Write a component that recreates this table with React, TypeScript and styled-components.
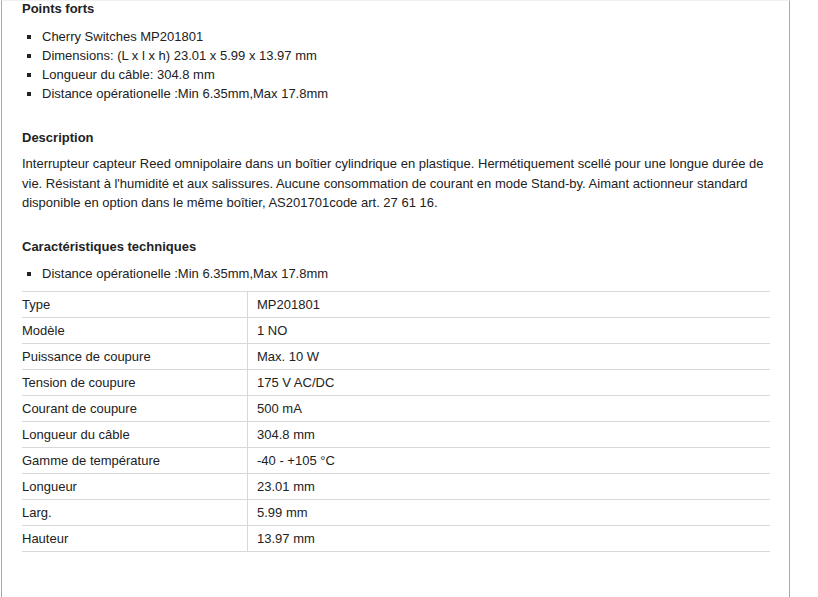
import React, { Fragment } from 'react';
import styled, { createGlobalStyle } from 'styled-components';

const Global = createGlobalStyle`
	body {
		margin: 0;
		background: #ffffff;
		font-family: 'Liberation Sans', Arial, sans-serif;
		color: #222222;
	}
`;

const Panel = styled.div`
	width: 748px;
	min-height: 597px;
	margin-left: 1px;
	padding: 0 19px 0 20px;
	border-left: 1px solid #a8a8a8;
	border-right: 1px solid #a8a8a8;
	border-top: 1px solid #f0f0f0;
	box-sizing: content-box;
`;

const Heading = styled.h3<{ $top: number }>`
	margin: ${(p) => p.$top}px 0 0 0;
	font-size: 13px;
	font-weight: bold;
	line-height: 16px;
	color: #222222;
`;

const Bullets = styled.ul<{ $top: number }>`
	margin: ${(p) => p.$top}px 0 0 0;
	padding: 0 0 0 20px;
	list-style: square;
	font-size: 13px;
	line-height: 19px;
`;

const Para = styled.p`
	margin: 8px 0 0 0;
	font-size: 13px;
	line-height: 19.5px;
	max-width: 748px;
`;

const Specs = styled.table`
	margin-top: 8px;
	width: 748px;
	border-collapse: collapse;
	font-size: 13px;
	border-top: 1px solid #d8d8d8;
`;

const Row = styled.tr`
	border-bottom: 1px solid #d8d8d8;
	height: 26px;
`;

const Cell = styled.td<{ $label?: boolean }>`
	padding: 1px 0 0 ${(p) => (p.$label ? 0 : 9)}px;
	width: ${(p) => (p.$label ? '225px' : 'auto')};
	border-right: ${(p) => (p.$label ? '1px solid #d8d8d8' : 'none')};
	vertical-align: middle;
`;

const specs: [string, string][] = [
	['Type', 'MP201801'],
	['Modèle', '1 NO'],
	['Puissance de coupure', 'Max. 10 W'],
	['Tension de coupure', '175 V AC/DC'],
	['Courant de coupure', '500 mA'],
	['Longueur du câble', '304.8 mm'],
	['Gamme de température', '-40 - +105 °C'],
	['Longueur', '23.01 mm'],
	['Larg.', '5.99 mm'],
	['Hauteur', '13.97 mm'],
];

function App() {
	return (
		<Fragment>
			<Global />
			<Panel>
				<Heading $top={0}>Points forts</Heading>
				<Bullets $top={10}>
					<li>Cherry Switches MP201801</li>
					<li>Dimensions: (L x l x h) 23.01 x 5.99 x 13.97 mm</li>
					<li>Longueur du câble: 304.8 mm</li>
					<li>Distance opérationelle :Min 6.35mm,Max 17.8mm</li>
				</Bullets>
				<Heading $top={27}>Description</Heading>
				<Para>
					Interrupteur capteur Reed omnipolaire dans un boîtier cylindrique en plastique. Hermétiquement
					scellé pour une longue durée de vie. Résistant à l'humidité et aux salissures. Aucune
					consommation de courant en mode Stand-by. Aimant actionneur standard disponible en option dans
					le même boîtier, AS201701code art. 27 61 16.
				</Para>
				<Heading $top={26}>Caractéristiques techniques</Heading>
				<Bullets $top={9}>
					<li>Distance opérationelle :Min 6.35mm,Max 17.8mm</li>
				</Bullets>
				<Specs>
					<tbody>
						{specs.map(([k, v]) => (
							<Row key={k}>
								<Cell $label>{k}</Cell>
								<Cell>{v}</Cell>
							</Row>
						))}
					</tbody>
				</Specs>
			</Panel>
		</Fragment>
	);
}

export default App;
